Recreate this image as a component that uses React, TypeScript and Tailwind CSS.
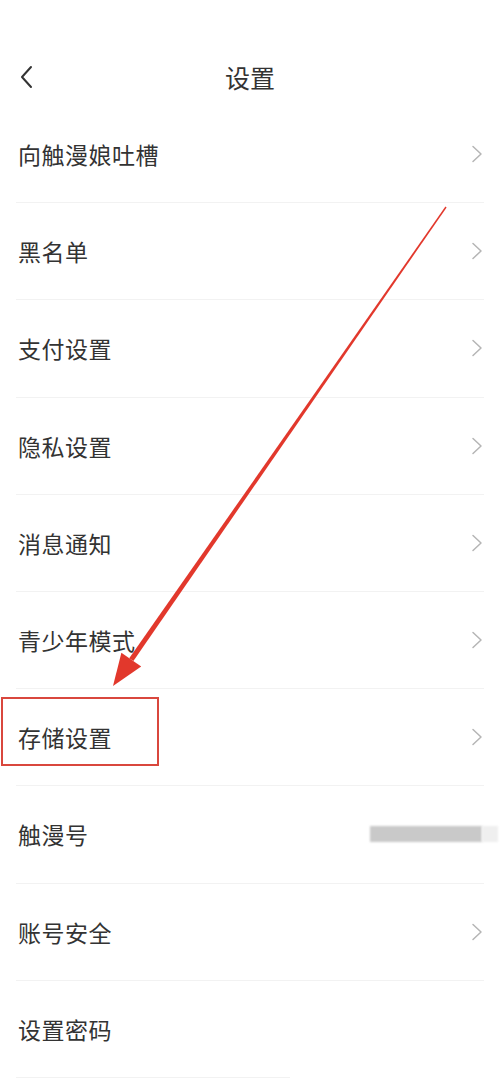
import React from 'react';

type Row = { label: string; right?: 'chevron' | 'blur' | 'none'; shortLine?: boolean };

const rows: Row[] = [
  { label: '向触漫娘吐槽', right: 'chevron' },
  { label: '黑名单', right: 'chevron' },
  { label: '支付设置', right: 'chevron' },
  { label: '隐私设置', right: 'chevron' },
  { label: '消息通知', right: 'chevron' },
  { label: '青少年模式', right: 'chevron' },
  { label: '存储设置', right: 'chevron' },
  { label: '触漫号', right: 'blur' },
  { label: '账号安全', right: 'chevron' },
  { label: '设置密码', right: 'none', shortLine: true },
];

function Chevron() {
  return (
    <svg width="12" height="18" viewBox="0 0 12 18" fill="none">
      <path d="M2 1.5 L10 9 L2 16.5" stroke="#b5b5b5" strokeWidth="1.5" strokeLinecap="round" strokeLinejoin="round" />
    </svg>
  );
}

export default function App() {
  return (
    <div
      className="relative w-[500px] h-[1084px] bg-white overflow-hidden text-[#333]"
      style={{ fontFamily: '"Noto Sans CJK SC", "Noto Sans", sans-serif' }}
    >
      {/* Header */}
      <div className="relative h-[106px]">
        <div className="absolute left-[18px] top-[64px]">
          <svg width="18" height="26" viewBox="0 0 18 26" fill="none">
            <path d="M13 3 L4 13 L13 23" stroke="#333" strokeWidth="2" strokeLinecap="round" strokeLinejoin="round" />
          </svg>
        </div>
        <div className="pt-[60px] text-center text-[25px] leading-[34px]">设置</div>
      </div>

      {/* List */}
      <div>
        {rows.map((row, i) => (
          <div key={i} className="px-[16px]">
            <div className="flex items-center h-[96.2px] pl-[2px]">
              <span className="text-[23px] leading-[30px] tracking-[0.5px]">{row.label}</span>
              <div className="ml-auto">
                {row.right === 'chevron' && (
                  <div className="mr-[1px]">
                    <Chevron />
                  </div>
                )}
                {row.right === 'blur' && (
                  <div className="flex items-center mr-[-14px]">
                    <div className="w-[112px] h-[16px] bg-[#c9c9c9] blur-[1px]" />
                    <div className="w-[16px] h-[16px] bg-[#efefef] blur-[1px]" />
                  </div>
                )}
              </div>
            </div>
            <div className={row.shortLine ? 'h-[1px] w-[274px] bg-[#f2f2f2]' : 'h-[1px] bg-[#f2f2f2]'} />
          </div>
        ))}
      </div>

      {/* Highlight box */}
      <div className="absolute left-[1px] top-[697px] w-[158px] h-[69px] border-2 border-[#d9473d]" />

      {/* Arrow */}
      <svg className="absolute left-0 top-0 pointer-events-none" width="500" height="1084" viewBox="0 0 500 1084">
        <polygon points="446.6,207.4 445.4,206.6 129.2,658.3 133.4,661.1" fill="#e2382c" />
        <polygon points="113,686 121.4,652.8 141.2,666.6" fill="#e2382c" />
      </svg>
    </div>
  );
}
